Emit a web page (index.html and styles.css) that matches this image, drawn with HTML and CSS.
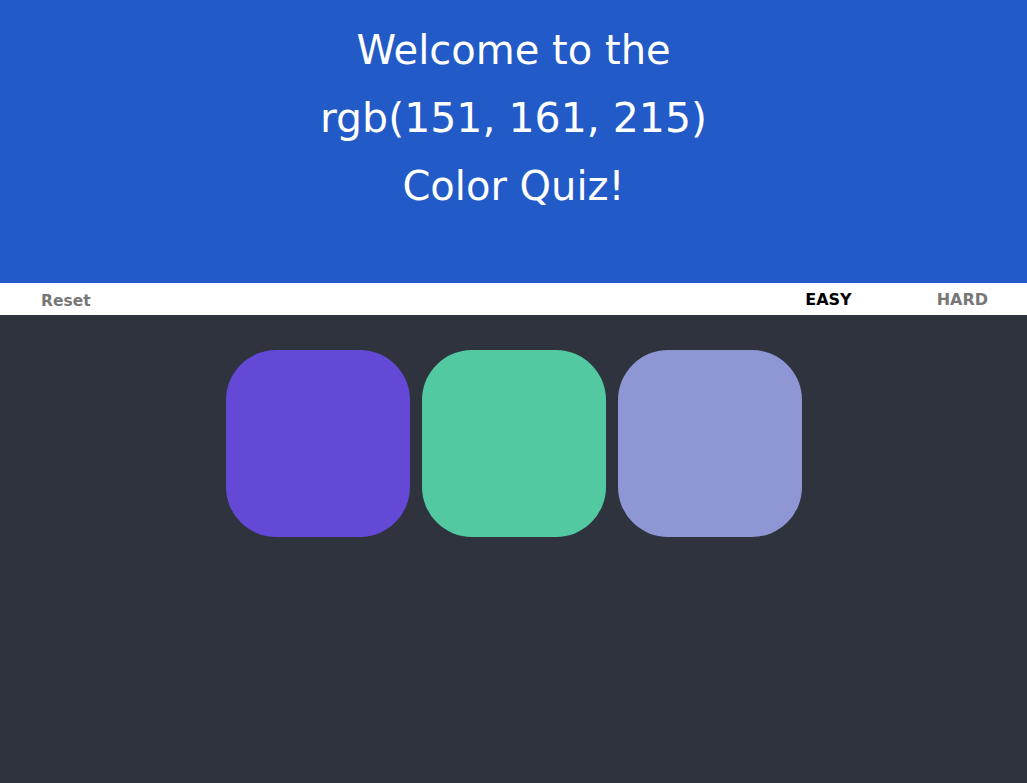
FILE: index.html
```html
<!DOCTYPE html>
<html>
<head>
<meta charset="utf-8">
<link rel="stylesheet" href="styles.css">
</head>
<body>
<header class="header">
  <h1 class="title">Welcome to the<br><span class="rgb">rgb(151, 161, 215)</span><br>Color Quiz!</h1>
</header>
<nav class="bar">
  <button class="btn reset">Reset</button>
  <span class="message"></span>
  <div class="modes">
    <button class="btn mode selected">EASY</button>
    <button class="btn mode">HARD</button>
  </div>
</nav>
<main class="board">
  <div class="square sq1"></div>
  <div class="square sq2"></div>
  <div class="square sq3"></div>
</main>
</body>
</html>
```
FILE: styles.css
```css
html, body {
  margin: 0;
  padding: 0;
  height: 100%;
}
body {
  background: #2e333d;
  font-family: "DejaVu Sans", Verdana, sans-serif;
}
.header {
  background: #225ac8;
  height: 283px;
  box-sizing: border-box;
  padding-top: 16px;
}
.title {
  margin: 0;
  color: #fff;
  font-weight: normal;
  font-size: 40px;
  line-height: 68px;
  text-align: center;
}
.rgb {
  font-size: 41px;
}
.bar {
  background: #fff;
  height: 32px;
  display: flex;
  align-items: center;
  justify-content: space-between;
}
.btn {
  background: none;
  border: none;
  font-family: "DejaVu Sans", Verdana, sans-serif;
  font-weight: bold;
  font-size: 16px;
  color: #777;
  padding: 0;
  cursor: pointer;
}
.reset {
  font-size: 15.5px;
  margin-left: 41px;
  margin-top: 4px;
}
.modes {
  display: flex;
  gap: 85px;
  margin-right: 39px;
}
.mode.selected {
  color: #000;
}
.board {
  display: flex;
  justify-content: center;
  padding-top: 35px;
  gap: 12px;
}
.square {
  width: 184px;
  height: 187px;
  border-radius: 50px;
}
.sq1 { background: #6349d6; }
.sq2 { background: #52c9a0; }
.sq3 { background: #8e97d3; }
```
